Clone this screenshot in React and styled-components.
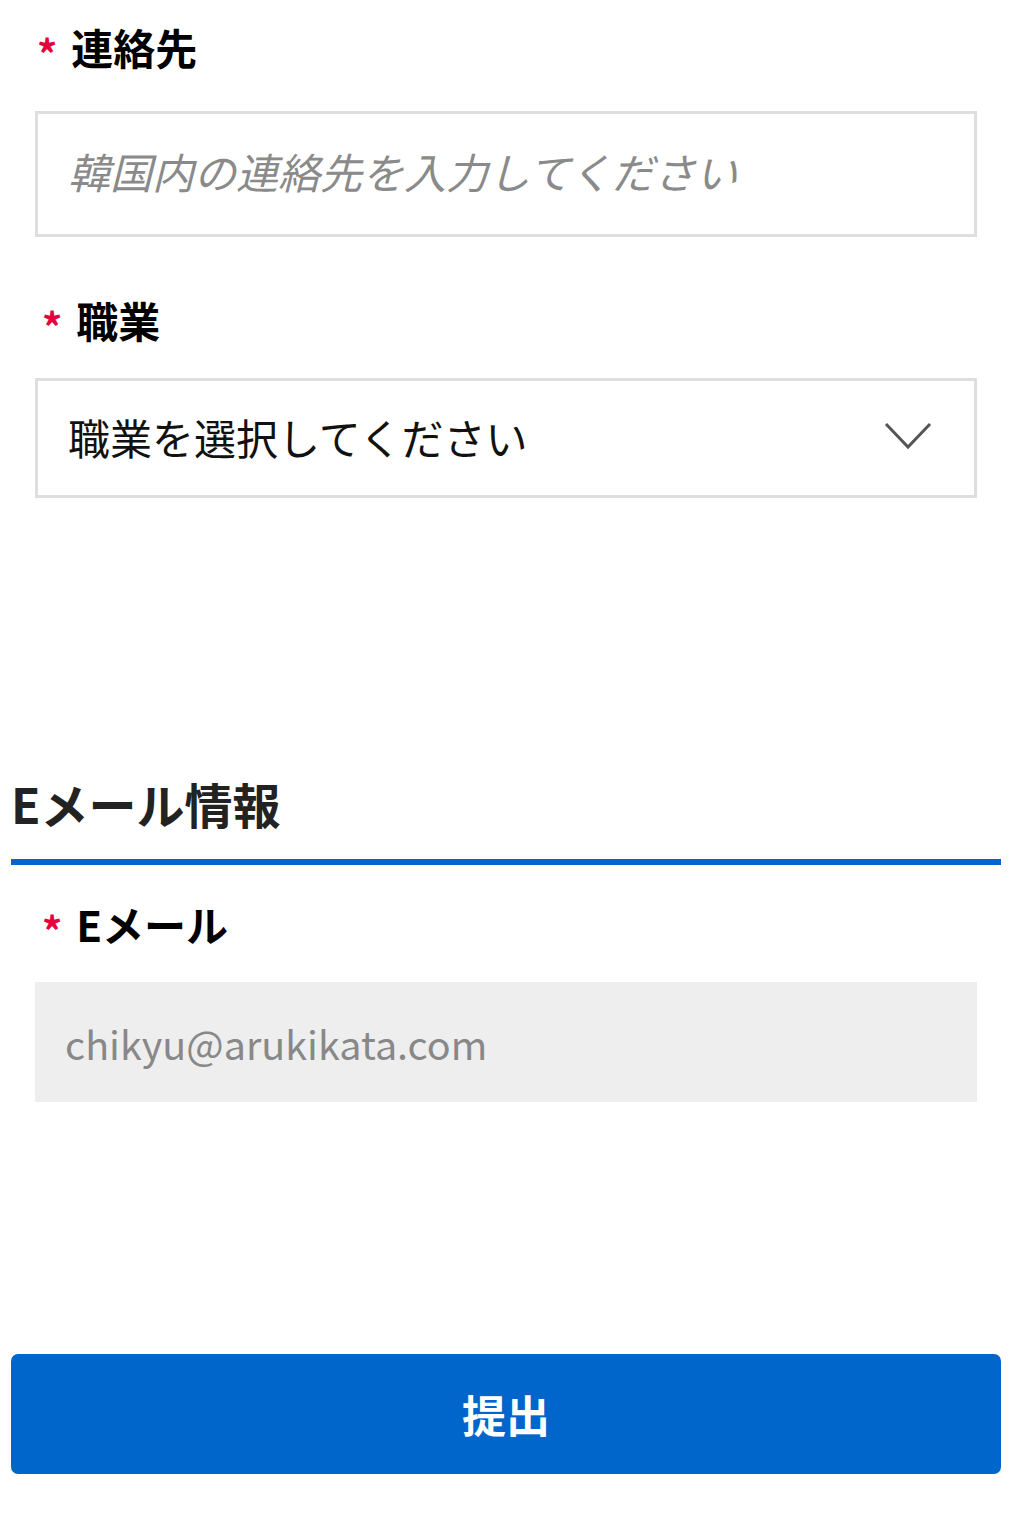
import React from "react";
import styled, { createGlobalStyle } from "styled-components";

const GlobalStyle = createGlobalStyle`
  body {
    margin: 0;
    padding: 0;
    background: #fff;
    font-family: "Noto Sans CJK JP", "Noto Sans", sans-serif;
  }
`;

const Page = styled.div`
  padding: 0 11px;
  width: 990px;
`;

const Fields = styled.div`
  padding: 0 24px;
`;

const Field = styled.div`
  padding-top: ${(p) => p.top}px;
`;

const Label = styled.div`
  display: flex;
  align-items: center;
  height: 56px;
  margin-left: ${(p) => p.indent || 0}px;
  margin-bottom: ${(p) => p.gap}px;
  font-size: 42px;
  font-weight: 700;
  color: #000;
  line-height: 56px;
`;

const Star = styled.span`
  color: #e8003d;
  font-size: 40px;
  font-weight: 700;
  margin-right: 14px;
  position: relative;
  top: 6px;
`;

const TextInput = styled.input`
  display: block;
  box-sizing: border-box;
  width: 100%;
  height: ${(p) => p.h}px;
  border: 3px solid #dedede;
  padding: 0 30px 8px;
  font-family: inherit;
  font-size: 42px;
  color: #222;
  outline: none;
  background: #fff;

  &::placeholder {
    color: #8a8a8a;
    font-style: italic;
  }
`;

const SelectBox = styled.div`
  box-sizing: border-box;
  height: 120px;
  border: 3px solid #dedede;
  padding: 0 42px 4px 30px;
  display: flex;
  align-items: center;
  justify-content: space-between;
  font-size: 42px;
  color: #111;
`;

const ReadOnlyInput = styled.input`
  display: block;
  box-sizing: border-box;
  width: 100%;
  height: 120px;
  border: none;
  background: #eeeeee;
  padding: 0 30px;
  font-family: inherit;
  font-size: 39.5px;
  color: #888;
  outline: none;
`;

const SectionTitle = styled.h2`
  margin: 275px 0 0;
  height: 60px;
  line-height: 60px;
  font-size: 48px;
  font-weight: 700;
  color: #222;
  padding-bottom: 26px;
  border-bottom: 6px solid #0066cc;
`;

const Submit = styled.button`
  display: block;
  width: 100%;
  height: 120px;
  margin-top: 252px;
  border: none;
  border-radius: 7px;
  background: #0066cc;
  color: #fff;
  font-family: inherit;
  font-size: 44px;
  font-weight: 700;
  cursor: pointer;
`;

const Chevron = () => (
  <svg width="48" height="28" viewBox="0 0 48 28" fill="none">
    <path d="M2 2 L24 25 L46 2" stroke="#555" strokeWidth="3" />
  </svg>
);

export default function App() {
  return (
    <>
      <GlobalStyle />
      <Page>
        <Fields>
          <Field top={19}>
            <Label gap={36} indent={2}>
              <Star>*</Star>連絡先
            </Label>
            <TextInput h={126} placeholder="韓国内の連絡先を入力してください" />
          </Field>
          <Field top={55}>
            <Label gap={30} indent={7}>
              <Star>*</Star>職業
            </Label>
            <SelectBox>
              <span>職業を選択してください</span>
              <Chevron />
            </SelectBox>
          </Field>
        </Fields>
        <SectionTitle>Eメール情報</SectionTitle>
        <Fields>
          <Field top={31}>
            <Label gap={30} indent={7}>
              <Star>*</Star>Eメール
            </Label>
            <ReadOnlyInput readOnly value="chikyu@arukikata.com" />
          </Field>
        </Fields>
        <Submit>提出</Submit>
      </Page>
    </>
  );
}
